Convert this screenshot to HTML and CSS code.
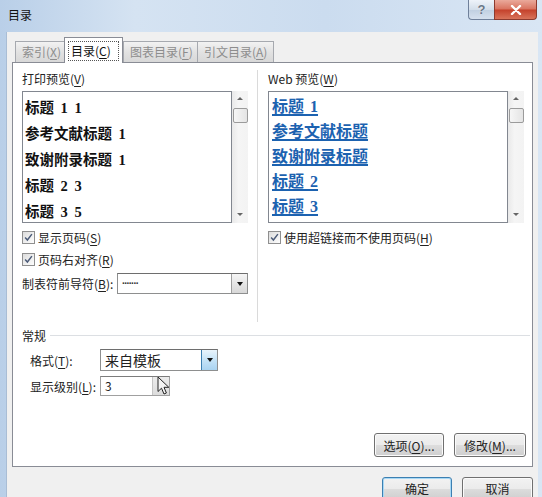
FILE: index.html
```html
<!DOCTYPE html>
<html lang="zh-CN">
<head>
    <meta charset="UTF-8">
    <meta name="viewport" content="width=device-width, initial-scale=1.0">
    <title>目录</title>
    <link rel="stylesheet" href="styles.css">
</head>
<body>
<div class="window">
    <div class="titlebar">
        <span class="title">目录</span>
        <div class="caption-buttons">
            <span class="cap help">?</span>
            <span class="cap close">
                <svg viewBox="0 0 12 10" width="12" height="10"><path d="M2 1 L10 9 M10 1 L2 9" stroke="#fff" stroke-width="2.4" stroke-linecap="round"/></svg>
            </span>
        </div>
    </div>

    <div class="client">
        <div class="tabs">
            <div class="tab">索引(<u>X</u>)</div>
            <div class="tab active"><span class="focus">目录(<u>C</u>)</span></div>
            <div class="tab">图表目录(<u>F</u>)</div>
            <div class="tab">引文目录(<u>A</u>)</div>
        </div>

        <div class="panel">
            <div class="columns">
                <div class="col col-left">
                    <div class="label">打印预览(<u>V</u>)</div>
                    <div class="preview">
                        <div class="listbox print">
                            <div class="item">标题 1 1</div>
                            <div class="item">参考文献标题 1</div>
                            <div class="item">致谢附录标题 1</div>
                            <div class="item">标题 2 3</div>
                            <div class="item">标题 3 5</div>
                        </div>
                        <div class="scrollbar">
                            <span class="arrow up"></span>
                            <span class="thumb"></span>
                            <span class="arrow down"></span>
                        </div>
                    </div>
                    <div class="check">
                        <span class="box"><svg viewBox="0 0 13 13" width="11" height="11"><path d="M2.5 6.5 L5.2 9.5 L10.5 2.5" fill="none" stroke="#4b5b78" stroke-width="1.7"/></svg></span>
                        显示页码(<u>S</u>)
                    </div>
                    <div class="check">
                        <span class="box"><svg viewBox="0 0 13 13" width="11" height="11"><path d="M2.5 6.5 L5.2 9.5 L10.5 2.5" fill="none" stroke="#4b5b78" stroke-width="1.7"/></svg></span>
                        页码右对齐(<u>R</u>)
                    </div>
                    <div class="field-row">
                        <span class="field-label leader-label">制表符前导符(<u>B</u>):</span>
                        <div class="combo leader">
                            <span class="combo-text dots">.......</span>
                            <span class="drop"><span class="tri"></span></span>
                        </div>
                    </div>
                </div>

                <div class="col col-right">
                    <div class="label">Web 预览(<u>W</u>)</div>
                    <div class="preview">
                        <div class="listbox web">
                            <div class="item"><a>标题 1</a></div>
                            <div class="item"><a>参考文献标题</a></div>
                            <div class="item"><a>致谢附录标题</a></div>
                            <div class="item"><a>标题 2</a></div>
                            <div class="item"><a>标题 3</a></div>
                        </div>
                        <div class="scrollbar">
                            <span class="arrow up"></span>
                            <span class="thumb"></span>
                            <span class="arrow down"></span>
                        </div>
                    </div>
                    <div class="check">
                        <span class="box"><svg viewBox="0 0 13 13" width="11" height="11"><path d="M2.5 6.5 L5.2 9.5 L10.5 2.5" fill="none" stroke="#4b5b78" stroke-width="1.7"/></svg></span>
                        使用超链接而不使用页码(<u>H</u>)
                    </div>
                </div>
            </div>

            <div class="group">
                <div class="group-head">
                    <span>常规</span>
                    <span class="group-line"></span>
                </div>
                <div class="field-row general">
                    <span class="field-label">格式(<u>T</u>):</span>
                    <div class="combo format">
                        <span class="combo-text">来自模板</span>
                        <span class="drop hover"><span class="tri"></span></span>
                    </div>
                </div>
                <div class="field-row general level-row">
                    <span class="field-label">显示级别(<u>L</u>):</span>
                    <div class="spin">
                        <span class="spin-text">3</span>
                        <span class="spin-buttons"></span>
                    </div>
                    <svg class="cursor" viewBox="0 0 13 20" width="13" height="20">
                        <path d="M1 1 L1 15.5 L4.5 12.2 L7 18 L9.4 17 L7 11.3 L11.8 11.3 Z" fill="#f4f4f4" stroke="#222" stroke-width="1" stroke-linejoin="round"/>
                    </svg>
                </div>
            </div>

            <div class="panel-buttons">
                <span class="btn">选项(<u>O</u>)...</span>
                <span class="btn wide">修改(<u>M</u>)...</span>
            </div>
        </div>

        <div class="dialog-buttons">
            <span class="btn default">确定</span>
            <span class="btn">取消</span>
        </div>
    </div>
</div>
</body>
</html>
```

FILE: styles.css
```css
* {
    box-sizing: border-box;
}
body {
    margin: 0;
    width: 542px;
    height: 497px;
    overflow: hidden;
    font-family: "Noto Sans CJK SC", "Liberation Sans", sans-serif;
    font-size: 12px;
    color: #222;
    background: #cfdef0;
}
u {
    text-decoration-thickness: 1px;
    text-underline-offset: 2px;
}
.window {
    position: relative;
    height: 497px;
    background: linear-gradient(to right, #b9cfe8, #d5e3f2 25%, #cbdcef 60%, #d9e6f4);
}
.titlebar {
    height: 32px;
    display: flex;
    align-items: flex-start;
}
.title {
    margin: 7px 0 0 8px;
    line-height: 16px;
    color: #111;
}
.caption-buttons {
    margin-left: auto;
    margin-right: 5px;
    display: flex;
}
.cap {
    height: 20px;
    display: flex;
    align-items: center;
    justify-content: center;
    border: 1px solid #6f809a;
    border-top: none;
}
.help {
    width: 26px;
    border-right: none;
    border-radius: 0 0 0 4px;
    background: linear-gradient(#eef3f9, #d3deea 50%, #c0cfe0 51%, #d6e1ee);
    color: #6a7788;
    font-family: "Liberation Sans", sans-serif;
    font-weight: bold;
    font-size: 13px;
    text-shadow: 0 0 1px #fff;
}
.close {
    width: 43px;
    border-radius: 0 0 4px 0;
    border-color: #8c3a2e;
    background: linear-gradient(#eaa99b, #d9735f 48%, #c4412b 52%, #d8735a);
}

.client {
    margin: 0 4px 0 6px;
    height: 465px;
    padding: 5px 5px 0 5px;
    background: #f0f0f0;
    border-left: 1px solid #a9bdd5;
}

.tabs {
    display: flex;
    align-items: flex-end;
    padding-left: 3px;
    height: 25px;
    position: relative;
    z-index: 1;
}
.tab {
    height: 21px;
    padding: 0 6px;
    line-height: 19px;
    border: 1px solid #a6a9af;
    border-bottom: none;
    margin-right: -1px;
    background: linear-gradient(#f2f2f2, #e2e2e2 50%, #d8d8d8);
    color: #8d8d8d;
    white-space: nowrap;
}
.tab:nth-child(1) { width: 52px; }
.tab:nth-child(3) { width: 75px; margin-left: 2px; }
.tab:nth-child(4) { width: 77px; }
.tab.active {
    width: 59px;
    height: 26px;
    margin: 0 -2px -1px -2px;
    padding: 3px 3px 0 3px;
    background: #fff;
    border-color: #898c95;
    color: #111;
    position: relative;
    z-index: 2;
}
.focus {
    display: block;
    line-height: 18px;
    padding: 0 2px;
    border: 1px dotted #555;
}

.panel {
    height: 405px;
    background: #fff;
    border: 1px solid #898c95;
    display: flex;
    flex-direction: column;
    padding-bottom: 9px;
}
.columns {
    display: flex;
    margin-top: 7px;
    height: 252px;
}
.col {
    padding-top: 1px;
}
.col-left {
    width: 245px;
    padding-left: 9px;
    border-right: 1px solid #dadada;
}
.col-right {
    flex: 1;
    padding-left: 10px;
}
.label {
    line-height: 16px;
    margin-bottom: 4px;
}
.preview {
    display: flex;
    height: 132px;
}
.listbox {
    height: 132px;
    border: 1px solid #828790;
    padding: 3px 0 0 2px;
    overflow: hidden;
    font-family: "Liberation Serif", "Noto Sans CJK SC", serif;
    font-weight: bold;
    color: #111;
}
.listbox.print {
    width: 210px;
    font-size: 14.5px;
    word-spacing: 3px;
}
.listbox.print .item {
    height: 26px;
    line-height: 26px;
}
.listbox.web {
    width: 240px;
    font-size: 16px;
    padding-left: 3px;
    padding-top: 2px;
    word-spacing: 2px;
}
.listbox.web .item {
    height: 25px;
    line-height: 25px;
}
.listbox.web a {
    color: #1c62b0;
    text-decoration: underline;
    text-decoration-thickness: 1.5px;
    text-underline-offset: 2px;
}

.scrollbar {
    width: 16px;
    height: 132px;
    background: linear-gradient(to right, #e9e9e9, #f5f5f5 40%, #f3f3f3);
    display: flex;
    flex-direction: column;
    align-items: center;
}
.arrow {
    width: 0;
    height: 0;
    border-left: 3px solid transparent;
    border-right: 3px solid transparent;
}
.arrow.up {
    margin-top: 6px;
    border-bottom: 3px solid #666;
}
.arrow.down {
    margin-top: auto;
    margin-bottom: 7px;
    border-top: 3px solid #666;
}
.thumb {
    margin-top: 8px;
    width: 15px;
    height: 15px;
    border: 1px solid #9b9b9b;
    border-radius: 2px;
    background: linear-gradient(to right, #f6f6f6, #e4e4e4);
}

.check {
    display: flex;
    align-items: center;
    height: 16px;
    margin-top: 6px;
    white-space: nowrap;
}
.box {
    width: 13px;
    height: 13px;
    margin-right: 3px;
    border: 1px solid #8f8f8f;
    background: linear-gradient(135deg, #dcdcdc, #fdfdfd);
    display: flex;
    align-items: center;
    justify-content: center;
}

.field-row {
    display: flex;
    align-items: center;
    margin-top: 6px;
}
.field-label {
    white-space: nowrap;
}
.leader-label {
    width: 95px;
}
.combo {
    height: 21px;
    border: 1px solid #8e8f8f;
    border-top-color: #6e6e6e;
    background: #fff;
    display: flex;
}
.combo.leader {
    width: 131px;
}
.combo-text {
    flex: 1;
    padding-left: 4px;
    line-height: 19px;
}
.dots {
    font-family: "Liberation Sans", sans-serif;
    font-size: 10px;
    font-weight: bold;
    color: #333;
    letter-spacing: -0.5px;
    line-height: 14px;
}
.drop {
    width: 16px;
    border-left: 1px solid #a0a0a0;
    background: linear-gradient(#f6f6f6, #e6e6e6 50%, #d8d8d8);
    display: flex;
    align-items: center;
    justify-content: center;
}
.drop.hover {
    border-left-color: #3c7fb1;
    background: linear-gradient(#e8f4fc, #c5e3f7 50%, #a9d3f1);
}
.tri {
    width: 0;
    height: 0;
    border-left: 3.5px solid transparent;
    border-right: 3.5px solid transparent;
    border-top: 4px solid #111;
}

.group {
    margin-top: 5px;
}
.group-head {
    display: flex;
    align-items: center;
    height: 16px;
    padding-left: 9px;
    padding-right: 2px;
}
.group-line {
    flex: 1;
    height: 1px;
    margin-left: 4px;
    background: #dcdfe3;
}
.general {
    padding-left: 17px;
}
.general .field-label {
    width: 70px;
}
.general:first-of-type {
    margin-top: 8px;
}
.combo.format {
    width: 118px;
    height: 22px;
    font-size: 14px;
}
.combo.format .combo-text {
    line-height: 20px;
}
.level-row {
    margin-top: 5px;
    position: relative;
}
.spin {
    width: 70px;
    height: 20px;
    border: 1px solid #a0a0a0;
    border-top-color: #7c7c7c;
    display: flex;
    background: #fff;
}
.spin-text {
    flex: 1;
    padding-left: 4px;
    line-height: 18px;
}
.spin-buttons {
    width: 17px;
    background: linear-gradient(#ececec, #dcdcdc);
    border-left: 1px solid #c4c4c4;
}
.cursor {
    position: absolute;
    left: 144px;
    top: 0;
}

.panel-buttons {
    margin-top: auto;
    display: flex;
    justify-content: flex-end;
    gap: 10px;
    padding-right: 6px;
}
.btn {
    width: 70px;
    height: 24px;
    display: flex;
    align-items: center;
    justify-content: center;
    border: 1px solid #707070;
    border-radius: 3px;
    background: linear-gradient(#f2f2f2, #ebebeb 50%, #dddddd 51%, #cfcfcf);
    box-shadow: inset 0 0 0 1px #fbfbfb;
    color: #222;
}
.btn.wide {
    width: 72px;
}
.dialog-buttons {
    display: flex;
    justify-content: flex-end;
    gap: 10px;
    margin-top: 10px;
}
.dialog-buttons .btn {
    height: 23px;
}
.dialog-buttons .btn:last-child {
    width: 71px;
}
.btn.default {
    border-color: #3c7fb1;
    box-shadow: inset 0 0 0 1px #a7d8f5;
}
```
